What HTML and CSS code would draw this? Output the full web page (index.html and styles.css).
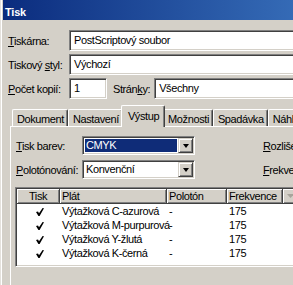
FILE: index.html
```html
<!DOCTYPE html>
<html lang="cs">
   <head>
      <meta charset="UTF-8">
      <meta name="viewport" content="width=device-width, initial-scale=1.0">
      <title>Tisk</title>
      <link rel="stylesheet" href="styles.css">
   </head>
   <body>
      <div class="window">
         <div class="titlebar">Tisk</div>
         <div class="content">
            <div class="field">
               <label class="field-label"><u>T</u>iskárna:</label>
               <div class="textbox wide">PostScriptový soubor</div>
            </div>
            <div class="field">
               <label class="field-label">Tiskový <u>s</u>tyl:</label>
               <div class="textbox wide">Výchozí</div>
            </div>
            <div class="field">
               <label class="field-label"><u>P</u>očet kopií:</label>
               <div class="textbox copies">1</div>
               <label class="pages-label">Strán<u>k</u>y:</label>
               <div class="textbox wide">Všechny</div>
            </div>

            <div class="tabs">
               <div class="tab">Dokument</div>
               <div class="tab">Nastavení</div>
               <div class="tab active">Výstup</div>
               <div class="tab">Možnosti</div>
               <div class="tab">Spadávka</div>
               <div class="tab">Náhled</div>
            </div>

            <div class="panel">
               <div class="option-row">
                  <label class="option-label"><u>T</u>isk barev:</label>
                  <div class="combo">
                     <span class="combo-value selected">CMYK</span>
                     <span class="combo-button"><span class="arrow"></span></span>
                  </div>
                  <label class="side-label"><u>R</u>ozlišení:</label>
               </div>
               <div class="option-row">
                  <label class="option-label"><u>P</u>olotónování:</label>
                  <div class="combo">
                     <span class="combo-value">Konvenční</span>
                     <span class="combo-button"><span class="arrow"></span></span>
                  </div>
                  <label class="side-label"><u>F</u>rekvence:</label>
               </div>

               <div class="list">
                  <div class="list-head">
                     <div class="head-cell center">Tisk</div>
                     <div class="head-cell">Plát</div>
                     <div class="head-cell">Polotón</div>
                     <div class="head-cell">Frekvence</div>
                     <div class="head-cell sort">
                        <svg width="7" height="4" viewBox="0 0 7 4"><polygon points="0,0 7,0 3.5,4" fill="#a8a49c"/></svg>
                     </div>
                  </div>
                  <div class="list-row">
                     <div class="cell center"><svg class="check" width="8" height="8" viewBox="0 0 8 8"><polygon points="0,4 2,3.5 3,5.3 6.6,0 8,0.3 3.6,8 2.4,8"/></svg></div>
                     <div class="cell">Výtažková C-azurová</div>
                     <div class="cell">-</div>
                     <div class="cell">175</div>
                  </div>
                  <div class="list-row">
                     <div class="cell center"><svg class="check" width="8" height="8" viewBox="0 0 8 8"><polygon points="0,4 2,3.5 3,5.3 6.6,0 8,0.3 3.6,8 2.4,8"/></svg></div>
                     <div class="cell">Výtažková M-purpurová</div>
                     <div class="cell">-</div>
                     <div class="cell">175</div>
                  </div>
                  <div class="list-row">
                     <div class="cell center"><svg class="check" width="8" height="8" viewBox="0 0 8 8"><polygon points="0,4 2,3.5 3,5.3 6.6,0 8,0.3 3.6,8 2.4,8"/></svg></div>
                     <div class="cell">Výtažková Y-žlutá</div>
                     <div class="cell">-</div>
                     <div class="cell">175</div>
                  </div>
                  <div class="list-row">
                     <div class="cell center"><svg class="check" width="8" height="8" viewBox="0 0 8 8"><polygon points="0,4 2,3.5 3,5.3 6.6,0 8,0.3 3.6,8 2.4,8"/></svg></div>
                     <div class="cell">Výtažková K-černá</div>
                     <div class="cell">-</div>
                     <div class="cell">175</div>
                  </div>
               </div>
            </div>
         </div>
      </div>
   </body>
</html>
```

FILE: styles.css
```css
/* Win2000 style print dialog */
body {
margin: 0;
background-color: #d4d0c8;
font-family: "Liberation Sans", Arial, sans-serif;
font-size: 11px;
letter-spacing: -0.4px;
color: #000;
overflow: hidden;
}
.window {
width: 440px;
height: 285px;
overflow: hidden;
padding-left: 3px;
background-color: #d4d0c8;
box-shadow: inset 1px 0 #e4e1dc, inset 2px 0 #ffffff;
}
.titlebar {
height: 20px;
box-sizing: border-box;
padding: 5px 0 0 2px;
line-height: 15px;
font-weight: bold;
letter-spacing: -0.2px;
color: #fff;
background: linear-gradient(to right, #0b2c7e, #4a8bd3);
}
.content {
padding: 10px 0 0 5px;
}
.field {
display: flex;
align-items: center;
height: 21px;
margin-bottom: 3px;
}
.field-label {
width: 61px;
}
.textbox {
height: 21px;
box-sizing: border-box;
padding: 0 4px;
line-height: 19px;
background-color: #fff;
border: 1px solid;
border-color: #808080 #fff #fff #808080;
box-shadow: inset 1px 1px #404040, inset -1px -1px #d4d0c8;
}
.textbox.wide {
flex: 1;
}
.textbox.copies {
width: 38px;
}
.pages-label {
margin: 0 4px 0 6px;
}

/* tabs */
.tabs {
display: flex;
align-items: flex-end;
height: 21px;
margin: 6px 0 0 2px;
padding-left: 2px;
position: relative;
z-index: 1;
}
.tab {
height: 17px;
box-sizing: border-box;
padding: 2px 3px 0 4px;
line-height: 14px;
border-top: 1px solid #fff;
border-left: 1px solid #fff;
border-right: 1px solid #404040;
box-shadow: inset -1px 0 #808080;
border-radius: 2px 2px 0 0;
white-space: nowrap;
}
.tab.active {
height: 22px;
margin: 0 -2px -1px -2px;
padding: 3px 5px 0 6px;
background-color: #d4d0c8;
position: relative;
}
.panel {
margin-left: 2px;
height: 150px;
padding: 9px 0 0 4px;
border-top: 1px solid #fff;
border-left: 1px solid #fff;
}

/* options */
.option-row {
display: flex;
align-items: center;
height: 19px;
margin-bottom: 5px;
}
.option-label {
width: 67px;
padding-left: 1px;
box-sizing: border-box;
}
.combo {
display: flex;
width: 113px;
height: 19px;
box-sizing: border-box;
padding: 1px;
background-color: #fff;
border: 1px solid;
border-color: #808080 #fff #fff #808080;
box-shadow: inset 1px 1px #404040, inset -1px -1px #d4d0c8;
}
.combo-value {
flex: 1;
margin: 1px;
padding-left: 1px;
line-height: 13px;
}
.combo-value.selected {
background-color: #0f2c78;
color: #fff;
}
.combo-button {
display: flex;
align-items: center;
justify-content: center;
width: 15px;
box-sizing: border-box;
background-color: #d4d0c8;
border: 1px solid;
border-color: #d4d0c8 #404040 #404040 #d4d0c8;
box-shadow: inset 1px 1px #fff, inset -1px -1px #808080;
}
.arrow {
width: 0;
height: 0;
border-left: 3.5px solid transparent;
border-right: 3.5px solid transparent;
border-top: 4px solid #000;
}
.side-label {
margin-left: 68px;
white-space: nowrap;
}

/* list view */
.list {
margin-top: 8px;
width: 400px;
height: 80px;
box-sizing: border-box;
padding: 1px;
background-color: #fff;
border: 1px solid;
border-color: #808080 #fff #fff #808080;
box-shadow: inset 1px 1px #404040, inset -1px -1px #d4d0c8;
}
.list-head,
.list-row {
display: grid;
grid-template-columns: 43px 107px 60px 56px 40px;
}
.head-cell {
height: 15px;
box-sizing: border-box;
padding-left: 2px;
line-height: 14px;
background-color: #d4d0c8;
border-right: 1px solid #404040;
border-bottom: 1px solid #404040;
box-shadow: inset 1px 1px #fff, inset -1px -1px #808080;
}
.head-cell.sort {
display: flex;
align-items: center;
padding-left: 4px;
}
.center {
text-align: center;
padding-left: 0;
}
.list-row {
height: 14px;
line-height: 14px;
}
.cell {
padding-left: 2px;
white-space: nowrap;
}
.check {
vertical-align: -1px;
}
```
